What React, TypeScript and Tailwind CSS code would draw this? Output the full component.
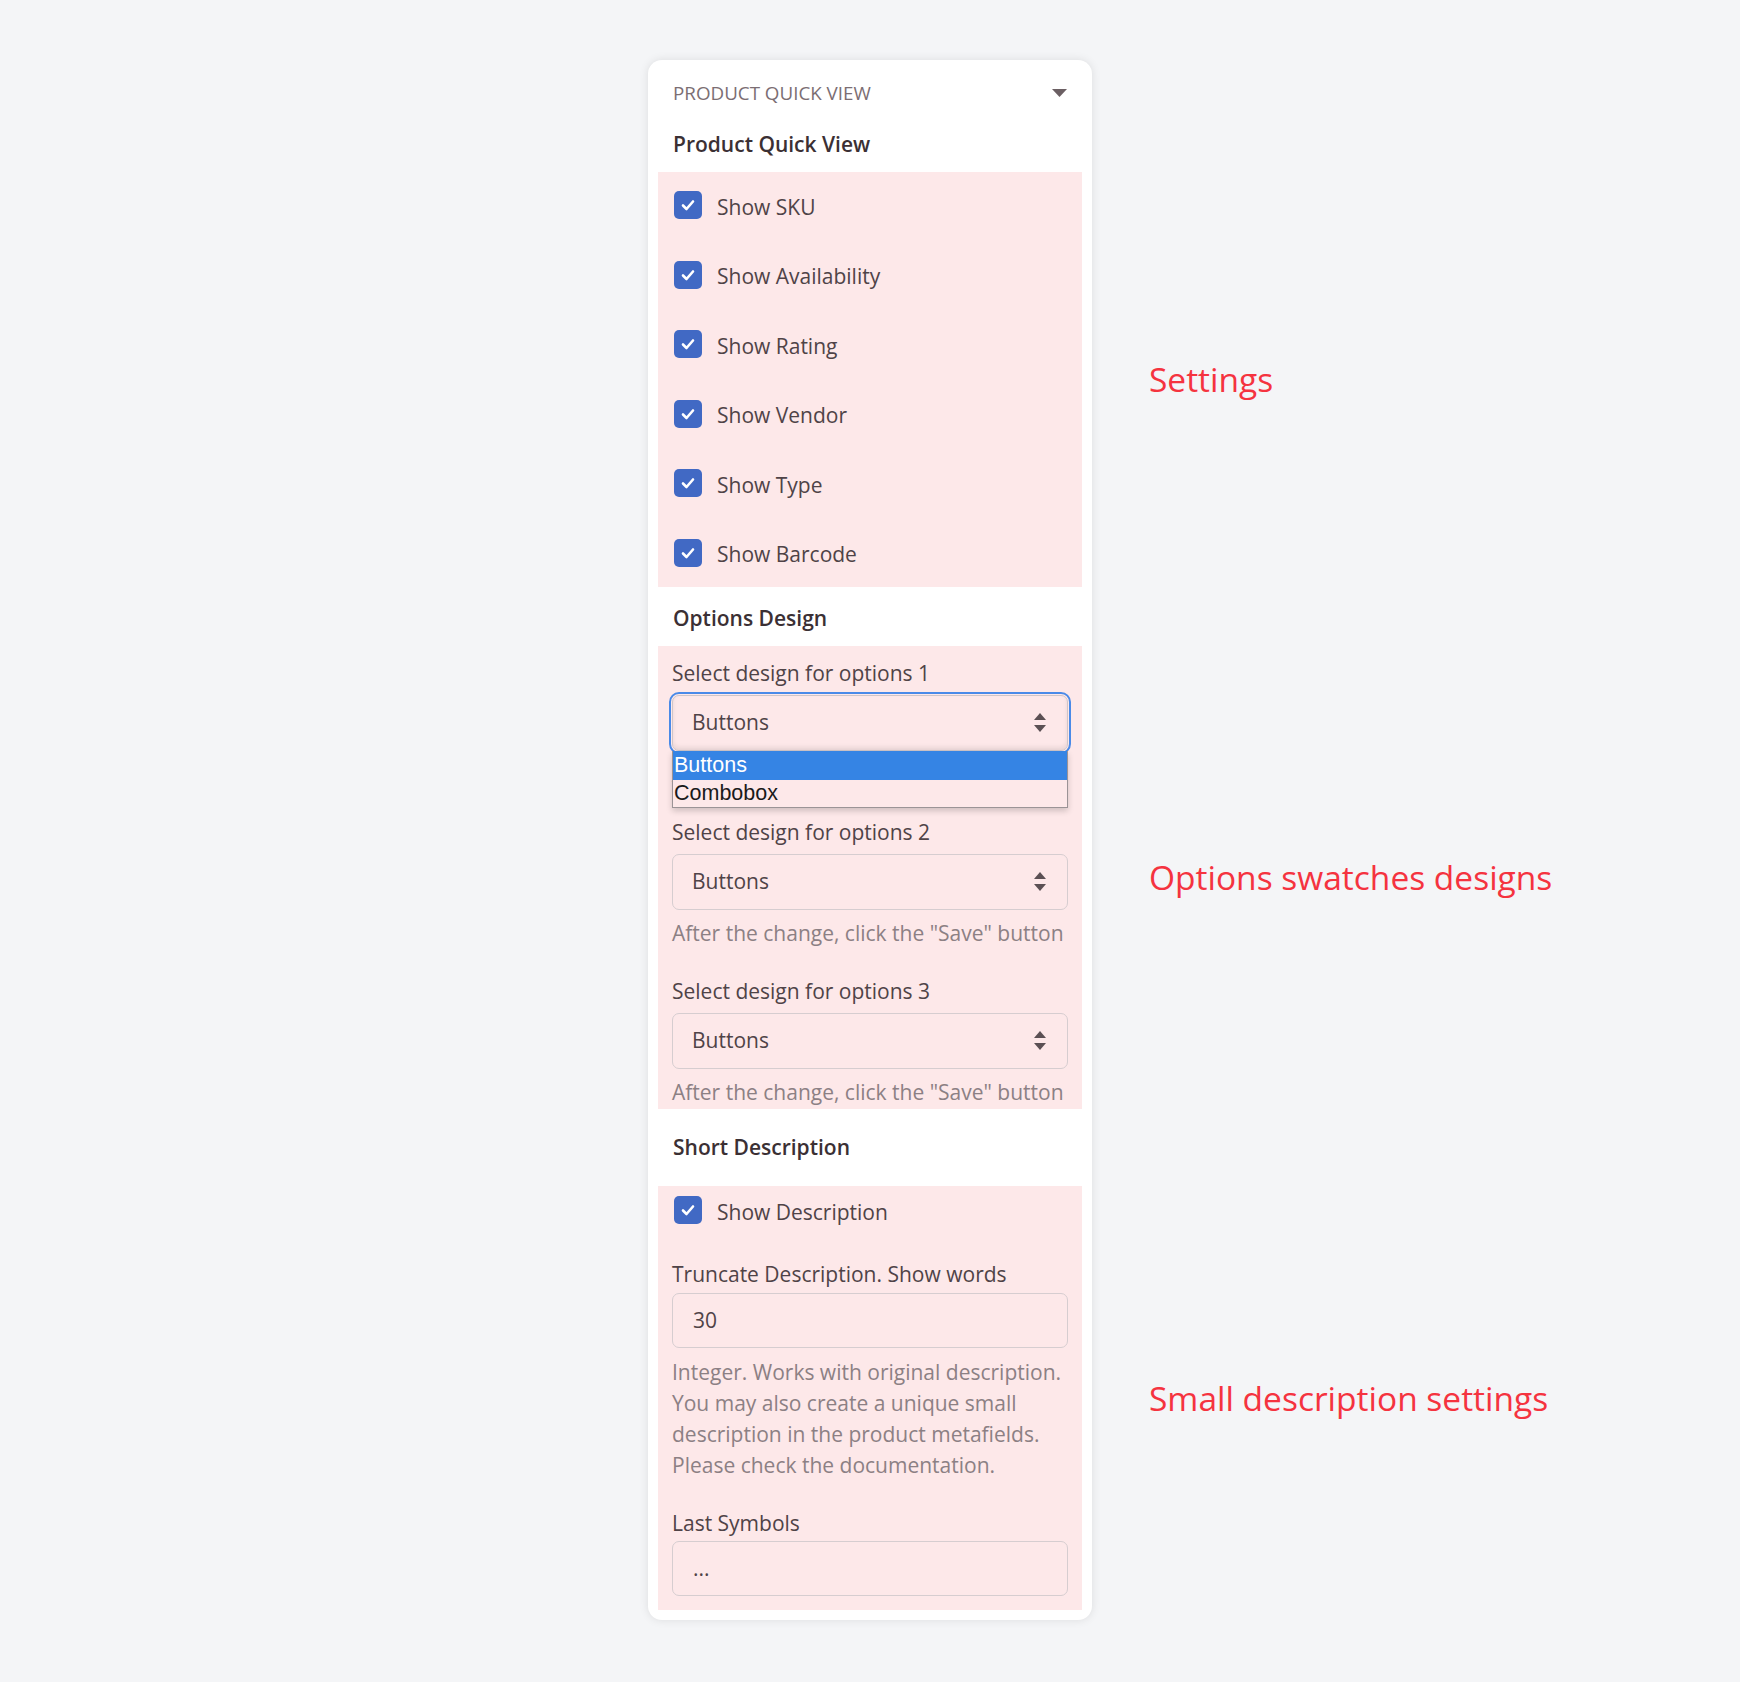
import React from "react";

const checkItems = ["Show SKU", "Show Availability", "Show Rating", "Show Vendor", "Show Type", "Show Barcode"];

function CheckIcon() {
  return (
    <span className="flex h-[28px] w-[28px] shrink-0 items-center justify-center rounded-[5px] bg-[#4169c4]">
      <svg width="18" height="18" viewBox="0 0 18 18" fill="none">
        <path d="M4 9.5 L7.5 13 L14 5.5" stroke="#ffffff" strokeWidth="2.6" strokeLinecap="round" strokeLinejoin="round" />
      </svg>
    </span>
  );
}

function CheckRow({ label }: { label: string }) {
  return (
    <div className="flex h-[28px] items-center gap-[15px]">
      <CheckIcon />
      <span className="pt-[3px] text-[21px] leading-[28px] text-[#4f4347]">{label}</span>
    </div>
  );
}

function Arrows() {
  return (
    <svg width="14" height="20" viewBox="0 0 14 20" className="shrink-0">
      <path d="M7 0 L13 7 L1 7 Z" fill="#5b5054" />
      <path d="M1 12 L13 12 L7 19 Z" fill="#5b5054" />
    </svg>
  );
}

function SelectBox({ focused }: { focused?: boolean }) {
  return (
    <div
      className={
        focused
          ? "flex h-[56px] items-center justify-between rounded-[7px] border border-[#cfc5c8] pl-[19px] pr-[20px] outline-2 outline-offset-1 outline-[#4a8ae8] shadow-[inset_0_-3px_4px_rgba(0,0,0,0.08)]"
          : "flex h-[56px] items-center justify-between rounded-[7px] border border-[#d6cdd0] pl-[19px] pr-[20px]"
      }
    >
      <span className="text-[21px] text-[#4f4347]">Buttons</span>
      <Arrows />
    </div>
  );
}

function Help({ children }: { children: React.ReactNode }) {
  return <p className="whitespace-nowrap text-[21px] leading-[30px] text-[#8c8084]">{children}</p>;
}

function OptionGroup({ n, open }: { n: number; open?: boolean }) {
  return (
    <div className="flex flex-col">
      <div className="flex h-[32px] items-center text-[21px] text-[#4f4347]">Select design for options {n}</div>
      <div className="relative mt-[5px]">
        <SelectBox focused={open} />
        {open && (
          <div className="absolute left-0 right-0 top-full z-10 border-x border-b border-[#9b9396] bg-[#fde8e9] font-['Liberation_Sans',Arial,sans-serif] text-[21.5px] leading-none shadow-[0_3px_6px_rgba(0,0,0,0.18)]">
            <div className="flex h-[29px] items-center bg-[#3584e4] px-[1px] text-white">Buttons</div>
            <div className="flex h-[27px] items-center px-[1px] text-[#1a1a1a]">Combobox</div>
          </div>
        )}
      </div>
      <div className="mt-[8px]">
        <Help>After the change, click the "Save" button</Help>
      </div>
    </div>
  );
}

function Heading({ children, className }: { children: React.ReactNode; className: string }) {
  return (
    <div className={"flex items-center px-[25px] text-[21px] font-semibold text-[#3b3034] " + className}>{children}</div>
  );
}

export default function App() {
  return (
    <div className="flex min-h-[1682px] w-full bg-[#f4f5f7] pl-[648px] pt-[60px] font-['Open_Sans','Noto_Sans',sans-serif]">
      <div className="flex h-[1560px] w-[444px] shrink-0 flex-col rounded-[14px] bg-white shadow-[0_0_10px_rgba(0,0,0,0.10)]">
        <div className="flex h-[66px] items-center justify-between px-[25px]">
          <span className="text-[18.8px] font-medium uppercase text-[#7b6e73]">Product Quick View</span>
          <svg width="15" height="8" viewBox="0 0 15 8">
            <path d="M0 0 L15 0 L7.5 8 Z" fill="#6b5f63" />
          </svg>
        </div>

        <Heading className="h-[46px] pb-[8px]">Product Quick View</Heading>

        <div className="mx-[10px] flex h-[415px] flex-col gap-[41.6px] bg-[#fde8e9] px-[16px] pt-[19px]">
          {checkItems.map((c) => (
            <CheckRow key={c} label={c} />
          ))}
        </div>

        <Heading className="h-[59px] pt-[5px]">Options Design</Heading>

        <div className="mx-[10px] flex h-[463px] flex-col gap-[28px] bg-[#fde8e9] px-[14px] pt-[12px]">
          <OptionGroup n={1} open />
          <OptionGroup n={2} />
          <OptionGroup n={3} />
        </div>

        <Heading className="h-[77px]">Short Description</Heading>

        <div className="mx-[10px] flex h-[424px] flex-col bg-[#fde8e9] px-[14px] pt-[10px]">
          <div className="pl-[2px]">
            <CheckRow label="Show Description" />
          </div>
          <div className="mt-[35px] flex h-[32px] items-center text-[21px] text-[#4f4347]">Truncate Description. Show words</div>
          <div className="mt-[2px] flex h-[55px] items-center rounded-[7px] border border-[#d6cdd0] pl-[20px] text-[21px] text-[#4f4347]">
            30
          </div>
          <div className="mt-[9px] whitespace-nowrap text-[21px] leading-[31px] text-[#8c8084]">
            Integer. Works with original description.
            <br />
            You may also create a unique small
            <br />
            description in the product metafields.
            <br />
            Please check the documentation.
          </div>
          <div className="mt-[27px] flex h-[32px] items-center text-[21px] text-[#4f4347]">Last Symbols</div>
          <div className="mt-[1px] flex h-[55px] items-center rounded-[7px] border border-[#d6cdd0] pl-[20px] text-[21px] text-[#4f4347]">
            ...
          </div>
        </div>
      </div>

      <div className="ml-[57px] flex flex-col pt-[112px] text-[33.5px] text-[#f5333f]">
        <div className="flex h-[415px] items-center">Settings</div>
        <div className="mt-[59px] flex h-[463px] items-center">Options swatches designs</div>
        <div className="mt-[77px] flex h-[424px] items-center">Small description settings</div>
      </div>
    </div>
  );
}
